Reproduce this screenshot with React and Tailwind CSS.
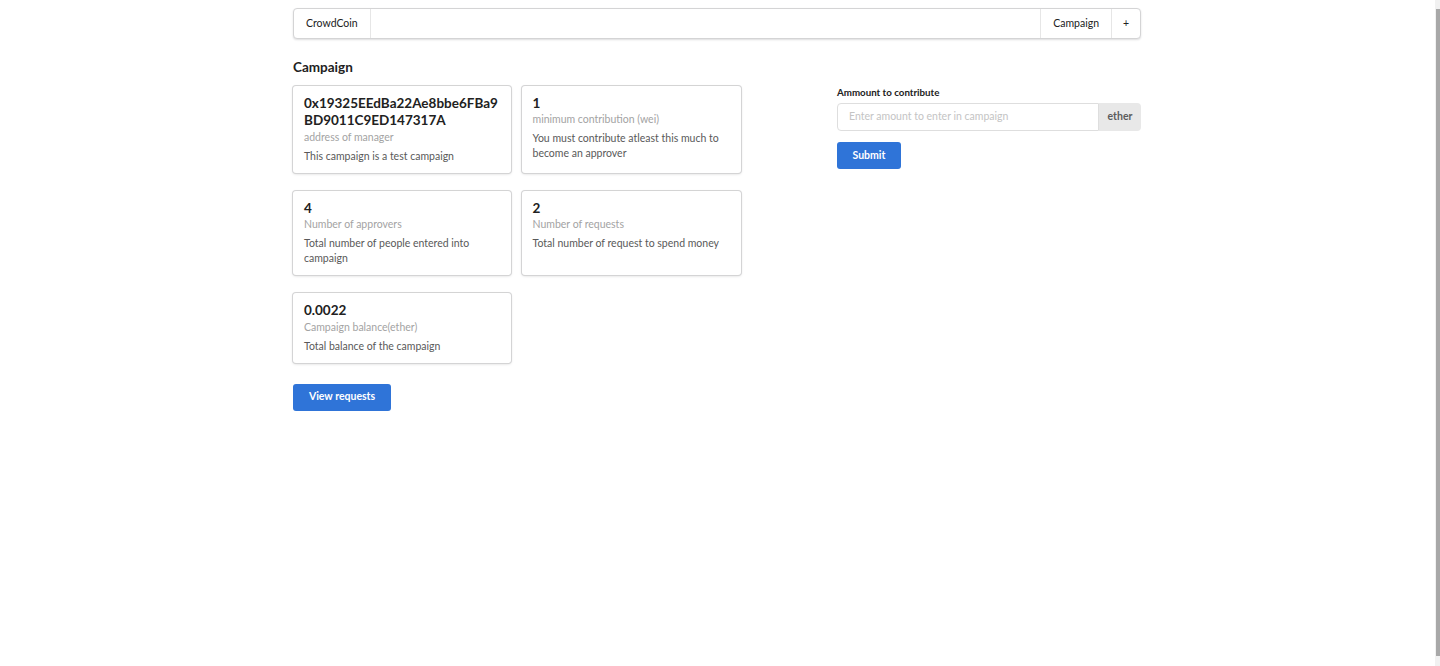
import React from "react";

const font = { fontFamily: "Lato, 'Noto Sans', sans-serif" };

function Card({ header, meta, desc, breakAll }) {
  return (
    <div className="rounded-[3px] bg-white shadow-[0_1px_3px_0_#d4d4d5,0_0_0_1px_#d4d4d5] pt-[9px] px-[11px] pb-[9px]">
      <div className={"text-[13.5px] leading-[17.4px] font-bold text-[#212121] " + (breakAll ? "break-all" : "")}>
        {header}
      </div>
      <div className="text-[10.5px] leading-[15px] text-[#a3a3a3]">{meta}</div>
      <div className="mt-[4px] text-[10.5px] leading-[15px] text-[#595959]">{desc}</div>
    </div>
  );
}

export default function App() {
  return (
    <div className="relative min-h-[666px] bg-white text-[#212121]" style={font}>
      <div className="mr-[5px]">
        <div className="ml-[293px] w-[848px] pt-[8px]">
          {/* Menu */}
          <div className="flex h-[31px] rounded-[4px] border border-[#d4d4d5] shadow-[0_1px_2px_0_rgba(34,36,38,0.15)] bg-white text-[10.5px] text-[#212121]">
            <div className="flex items-center px-[12px] border-r border-[#e6e6e6]">CrowdCoin</div>
            <div className="flex-1" />
            <div className="flex items-center px-[12px] border-l border-[#e6e6e6]">Campaign</div>
            <div className="flex items-center justify-center w-[29px] border-l border-[#e6e6e6]">+</div>
          </div>

          <h3 className="mt-[20px] text-[13.5px] leading-[17px] font-bold text-[#212121]">Campaign</h3>

          <div className="mt-[9px] flex items-start">
            <div className="w-[544px] pt-[1px]">
              <div className="grid grid-cols-[218px_219px] gap-x-[10.5px] gap-y-[18px]">
                <Card
                  breakAll
                  header="0x19325EEdBa22Ae8bbe6FBa9BD9011C9ED147317A"
                  meta="address of manager"
                  desc="This campaign is a test campaign"
                />
                <Card
                  header="1"
                  meta="minimum contribution (wei)"
                  desc="You must contribute atleast this much to become an approver"
                />
                <Card
                  header="4"
                  meta="Number of approvers"
                  desc="Total number of people entered into campaign"
                />
                <Card
                  header="2"
                  meta="Number of requests"
                  desc="Total number of request to spend money"
                />
                <Card
                  header="0.0022"
                  meta="Campaign balance(ether)"
                  desc="Total balance of the campaign"
                />
              </div>
              <button className="mt-[21px] h-[27px] w-[98px] rounded-[3px] bg-[#2f74d8] text-white text-[10.5px] font-bold">
                View requests
              </button>
            </div>

            <div className="w-[304px]">
              <div className="text-[9.75px] leading-[14px] font-bold text-[#212121]">Ammount to contribute</div>
              <div className="mt-[4px] flex h-[28px]">
                <input
                  className="flex-1 min-w-0 rounded-l-[4px] border border-[#dedede] px-[11px] text-[10.5px] text-[#212121] placeholder:text-[#c4c4c4] outline-none"
                  style={font}
                  placeholder="Enter amount to enter in campaign"
                />
                <div className="flex items-center justify-center w-[42px] rounded-r-[4px] bg-[#e8e8e8] text-[10.5px] font-bold text-[#5c5c5c]">
                  ether
                </div>
              </div>
              <button className="mt-[11px] h-[27px] w-[64px] rounded-[3px] bg-[#2f74d8] text-white text-[10.5px] font-bold">
                Submit
              </button>
            </div>
          </div>
        </div>
      </div>

      {/* scrollbar */}
      <div className="absolute right-0 top-0 h-[666px] w-[5px] bg-[#f1f1f1]">
        <div className="mt-[9px] ml-[1px] h-[647px] w-[4px] bg-[#a8a8a8]" />
      </div>
    </div>
  );
}
